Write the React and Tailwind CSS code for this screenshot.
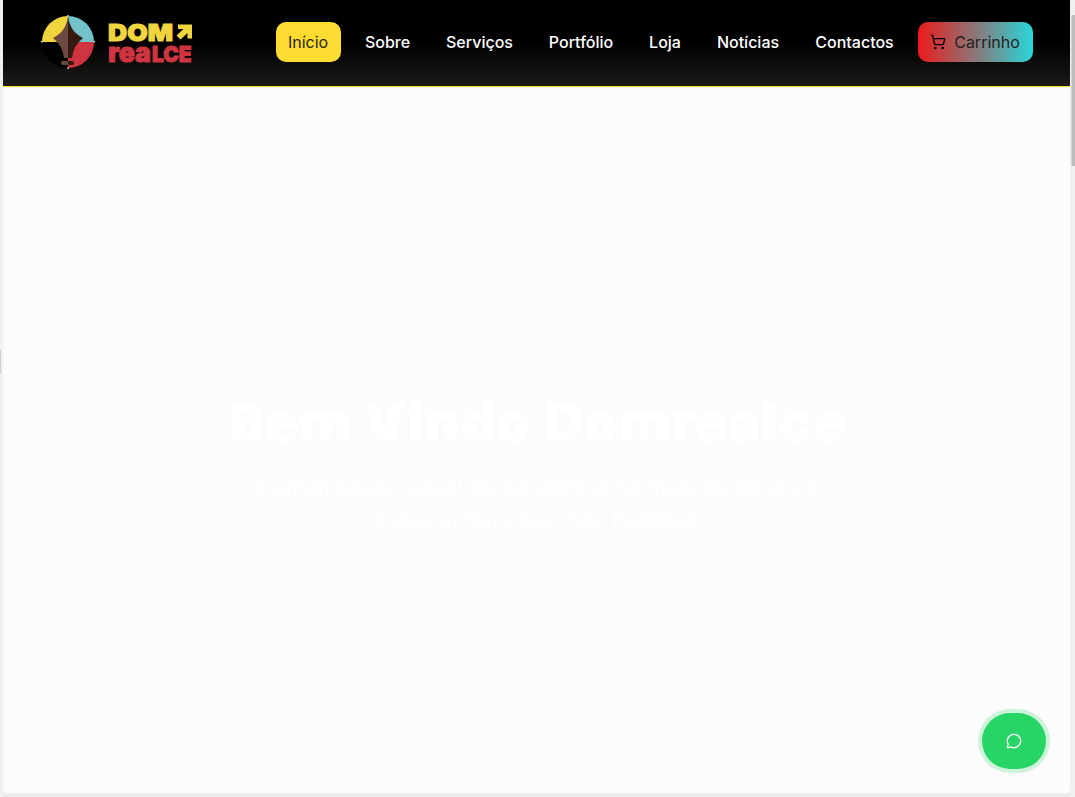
import React from "react";
import { ShoppingCart, MessageCircle } from "lucide-react";

const links = [
  { label: "Sobre", width: "w-[69px]" },
  { label: "Serviços", width: "w-[91px]" },
  { label: "Portfólio", width: "w-[88px]" },
  { label: "Loja", width: "w-[56px]" },
  { label: "Notícias", width: "w-[86px]" },
  { label: "Contactos", width: "w-[103px]" },
];

function Emblem() {
  return (
    <svg width="66" height="64" viewBox="0 0 66 64" className="shrink-0" role="img" aria-label="Dom Realce">
      <path d="M31 32H5A26 26 0 0 1 31 6Z" fill="#f0d53e" />
      <path d="M31 32V6A26 26 0 0 1 57 32Z" fill="#73c2c9" />
      <path d="M31 32H57A26 26 0 0 1 31 58Z" fill="#cf3540" />
      <path d="M31 32V58A26 26 0 0 1 5 32Z" fill="#000" />
      <path d="M31 6Q29 22 16 28Q26 36 27 48H31Z" fill="#6d4a3f" />
      <path d="M31 6Q33 22 46 28Q36 36 35 48H31Z" fill="#351a12" />
      <rect x="24" y="51" width="9" height="4" rx="2" fill="#6d4a3f" />
      <path d="M31 51H35A2 2 0 0 1 35 55H31Z" fill="#351a12" />
      <g fill="#d8d8d0">
        <rect x="30.300" y="5" width="1.500" height="1.500" />
        <rect x="4" y="31" width="1.500" height="1.500" />
        <rect x="56.500" y="31" width="1.500" height="1.500" />
        <rect x="30.300" y="57.500" width="1.500" height="1.500" />
      </g>
    </svg>
  );
}

function Wordmark() {
  return (
    <svg width="90" height="64" viewBox="0 0 90 64" className="overflow-visible font-['Inter',sans-serif] font-black">
      <text x="5" y="30.500" fontSize="23" textLength="65" lengthAdjust="spacingAndGlyphs" fill="#f0d53e" stroke="#f0d53e" strokeWidth="1">DOM</text>
      <path d="M75 14.500H89V28.500H84.500V23L77.500 29.500L73.500 25.500L80.500 19H75Z" fill="#f0d53e" />
      <g fill="#cf3540" stroke="#cf3540" strokeWidth="1">
        <text x="5" y="51.500" fontSize="27" textLength="43" lengthAdjust="spacingAndGlyphs">rea</text>
        <text x="49" y="51.500" fontSize="22" textLength="39.500" lengthAdjust="spacingAndGlyphs">LCE</text>
      </g>
    </svg>
  );
}

export default function App() {
  return (
    <div className="flex h-[797px] w-[1075px] overflow-hidden bg-[#ebebeb] font-['Inter',sans-serif]">
      <div className="flex w-[3px] shrink-0 flex-col bg-[#f0f0f0] pt-[350px]">
        <div className="h-6 w-px bg-[#cfcfcf]" />
      </div>
      <div className="flex h-[793px] w-[1067px] shrink-0 flex-col rounded-b-[4px] bg-[#fcfcfc]">
        <header className="flex h-[87px] shrink-0 items-start border-b border-[#ffdd18] bg-linear-to-b/srgb from-black from-50% to-[#1c1b19] pl-[34px]">
          <div className="flex pt-[10px]"><Emblem /><Wordmark /></div>
          <nav className="ml-[83px] flex gap-3 pt-[22px] text-base font-medium text-white">
            <a className="flex h-10 w-[65px] items-center justify-center rounded-[10px] bg-[#ffdc32] pr-px font-normal text-[#29251c]">Início</a>
            {links.map((l) => (
              <a key={l.label} className={`flex h-10 items-center justify-center ${l.width}`}>{l.label}</a>
            ))}
            <a className="flex h-10 w-[115px] items-center justify-center gap-2 rounded-[10px] bg-linear-to-r/srgb from-[#ed1b1b] to-[#27d5d8] pr-px font-normal text-[#241e1e]">
              <ShoppingCart size={16} strokeWidth={2} className="text-black" />
              Carrinho
            </a>
          </nav>
        </header>
        <main className="flex grow flex-col items-center pt-[297px] text-center text-white">
          <h1 className="flex h-[78px] items-center gap-[12px] pl-[3px] text-[53px] font-black tracking-[1.8px] whitespace-nowrap">
            <span>Bem</span><span>Vindo</span><span>Domrealce</span>
          </h1>
          <p className="mt-[9px] text-[21.700px] leading-[33px] whitespace-nowrap">Comunicação visual de excelência há mais de 40 anos</p>
          <div className="flex gap-4 text-[21.700px] leading-[33px]">
            <a>Explorar Serviços</a>
            <a>Ver Portfólio</a>
          </div>
          <button className="mt-auto mr-6 mb-6 flex h-14 w-16 items-center justify-center self-end rounded-[28px] bg-[#27d466] pr-px ring-4 ring-[#cdf3db]" aria-label="Chat">
            <MessageCircle size={16} strokeWidth={2} />
          </button>
        </main>
      </div>
      <div className="flex h-[797px] grow flex-col items-end bg-[#f0f0f0] pt-[15px]">
        <div className="h-[151px] w-[4px] border-l border-[#d5d5d5] bg-[#bdbdbd]" />
      </div>
    </div>
  );
}
